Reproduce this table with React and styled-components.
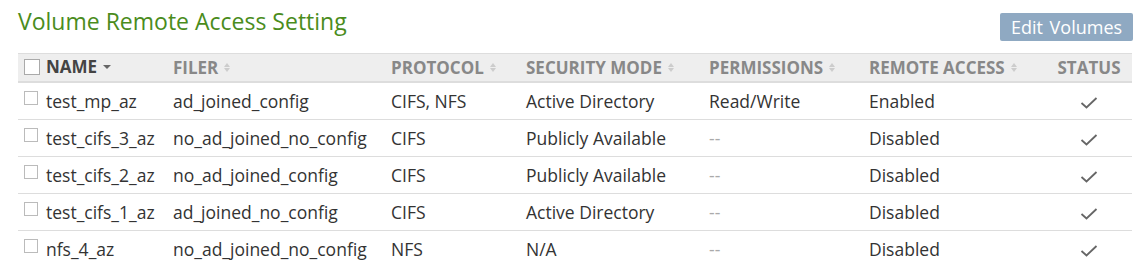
import styled, { createGlobalStyle } from "styled-components";

const Global = createGlobalStyle`
  body {
    margin: 0;
    background: #fff;
    font-family: "Open Sans", "Liberation Sans", sans-serif;
    color: #333;
  }
`;

const Page = styled.div`
  padding: 5px 9px 0 18px;
`;

const TitleBar = styled.div`
  display: flex;
  justify-content: space-between;
  align-items: flex-start;
  height: 48px;
`;

const Title = styled.h1`
  margin: 0;
  font-size: 23px;
  font-weight: 400;
  color: #4a8c1c;
  line-height: 32px;
`;

const Button = styled.button`
  margin-top: 8px;
  height: 28px;
  width: 133px;
  padding: 0;
  border: none;
  border-radius: 2px;
  background: #8fa9c2;
  color: #fff;
  font-family: inherit;
  font-size: 18px;
  word-spacing: 2px;
`;

const Table = styled.table`
  width: 1114px;
  border-collapse: collapse;
  table-layout: fixed;
`;

const Th = styled.th`
  background: #eee;
  border-top: 1px solid #ddd;
  border-bottom: 2px solid #ddd;
  height: 27px;
  padding: 0 6px;
  text-align: ${(p) => (p.$center ? "center" : "left")};
  font-size: 17px;
  font-weight: 700;
  color: ${(p) => (p.$active ? "#444" : "#888")};
  white-space: nowrap;
`;

const Td = styled.td`
  border-bottom: 1px solid #ddd;
  height: 36px;
  padding: 0 6px;
  font-size: 17.5px;
  color: ${(p) => (p.$muted ? "#aaa" : "#333")};
  text-align: ${(p) => (p.$center ? "center" : "left")};
  white-space: nowrap;
  tr:last-child & {
    border-bottom: none;
  }
`;

const NameWrap = styled.span`
  display: inline-flex;
  align-items: center;
  gap: ${(p) => (p.$head ? 6 : 8)}px;
`;

const Box = styled.span`
  display: inline-block;
  width: ${(p) => (p.$head ? 14 : 12)}px;
  height: ${(p) => (p.$head ? 14 : 12)}px;
  border: 1px solid ${(p) => (p.$head ? "#aaa" : "#bbb")};
  background: #fff;
  position: relative;
  top: ${(p) => (p.$head ? 0 : -3)}px;
`;

const Sort = styled.span`
  display: inline-flex;
  flex-direction: column;
  margin-left: 6px;
  vertical-align: middle;
  position: relative;
  top: -2px;
  gap: 1px;
  span {
    width: 0;
    height: 0;
    border-left: 3px solid transparent;
    border-right: 3px solid transparent;
  }
  span:first-child {
    border-bottom: 4px solid #ccc;
  }
  span:last-child {
    border-top: 4px solid #ccc;
  }
`;

const Caret = styled.span`
  display: inline-block;
  margin-left: 6px;
  width: 0;
  height: 0;
  border-left: 4px solid transparent;
  border-right: 4px solid transparent;
  border-top: 4px solid #666;
  vertical-align: middle;
  position: relative;
  top: -2px;
`;

const SortIcon = () => (
  <Sort>
    <span />
    <span />
  </Sort>
);

const Check = () => (
  <svg width="18" height="14" viewBox="0 0 18 14" style={{ verticalAlign: "middle" }}>
    <path d="M1.5 7 L6.5 11.5 L16.5 2" fill="none" stroke="#666" strokeWidth="1.8" />
  </svg>
);

const rows = [
  ["test_mp_az", "ad_joined_config", "CIFS, NFS", "Active Directory", "Read/Write", "Enabled"],
  ["test_cifs_3_az", "no_ad_joined_no_config", "CIFS", "Publicly Available", "--", "Disabled"],
  ["test_cifs_2_az", "no_ad_joined_config", "CIFS", "Publicly Available", "--", "Disabled"],
  ["test_cifs_1_az", "ad_joined_no_config", "CIFS", "Active Directory", "--", "Disabled"],
  ["nfs_4_az", "no_ad_joined_no_config", "NFS", "N/A", "--", "Disabled"],
];

export default function App() {
  return (
    <Page>
      <Global />
      <TitleBar>
        <Title>Volume Remote Access Setting</Title>
        <Button>Edit Volumes</Button>
      </TitleBar>
      <Table>
        <colgroup>
          <col style={{ width: 149 }} />
          <col style={{ width: 218 }} />
          <col style={{ width: 135 }} />
          <col style={{ width: 183 }} />
          <col style={{ width: 160 }} />
          <col style={{ width: 183 }} />
          <col style={{ width: 86 }} />
        </colgroup>
        <thead>
          <tr>
            <Th $active>
              <NameWrap $head>
                <Box $head />
                <span>
                  NAME
                  <Caret />
                </span>
              </NameWrap>
            </Th>
            <Th>FILER<SortIcon /></Th>
            <Th>PROTOCOL<SortIcon /></Th>
            <Th>SECURITY MODE<SortIcon /></Th>
            <Th>PERMISSIONS<SortIcon /></Th>
            <Th>REMOTE ACCESS<SortIcon /></Th>
            <Th $center>STATUS</Th>
          </tr>
        </thead>
        <tbody>
          {rows.map((r) => (
            <tr key={r[0]}>
              <Td>
                <NameWrap>
                  <Box />
                  {r[0]}
                </NameWrap>
              </Td>
              <Td>{r[1]}</Td>
              <Td>{r[2]}</Td>
              <Td>{r[3]}</Td>
              <Td $muted={r[4] === "--"}>{r[4]}</Td>
              <Td>{r[5]}</Td>
              <Td $center>
                <Check />
              </Td>
            </tr>
          ))}
        </tbody>
      </Table>
    </Page>
  );
}
